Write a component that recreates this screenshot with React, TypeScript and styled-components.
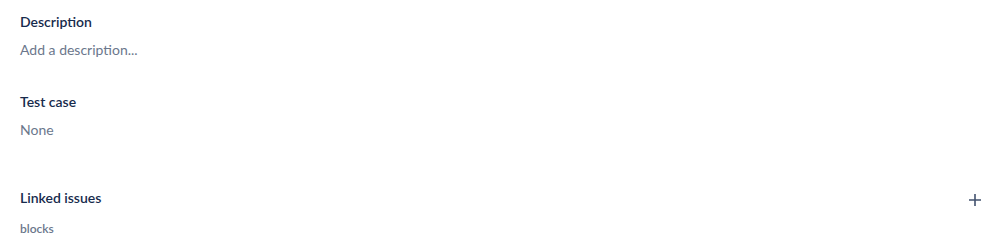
import styled, { createGlobalStyle } from "styled-components";

const GlobalStyle = createGlobalStyle`
  body {
    margin: 0;
    background: #ffffff;
    font-family: "Segoe UI", Lato, "Noto Sans", sans-serif;
    color: #172b4d;
  }
`;

const Page = styled.div`
  width: 999px;
  height: 243px;
  box-sizing: border-box;
  padding: 12px 12px 0 20px;
  display: flex;
  flex-direction: column;
  overflow: hidden;
`;

const Section = styled.section<{ $gap: number }>`
  display: flex;
  flex-direction: column;
  margin-bottom: ${(p) => p.$gap}px;
`;

const Header = styled.div`
  display: flex;
  align-items: center;
  justify-content: space-between;
  height: 20px;
`;

const Title = styled.h2`
  margin: 0;
  font-size: 14px;
  font-weight: 600;
  line-height: 20px;
  color: #172b4d;
`;

const Value = styled.div`
  margin-top: 8px;
  font-size: 14px;
  line-height: 20px;
  color: #6b778c;
`;

const SubLabel = styled.div`
  margin-top: 13px;
  font-size: 12px;
  font-weight: 600;
  line-height: 16px;
  color: #6b778c;
`;

const IconButton = styled.button`
  border: 0;
  background: none;
  padding: 0;
  margin-top: 4px;
  width: 24px;
  height: 24px;
  display: flex;
  align-items: center;
  justify-content: center;
  color: #42526e;
  cursor: pointer;
`;

const PlusIcon = () => (
  <svg width="12" height="12" viewBox="0 0 12 12">
    <path d="M6 0v12M0 6h12" stroke="currentColor" strokeWidth="1.6" />
  </svg>
);

export default function App() {
  return (
    <>
      <GlobalStyle />
      <Page>
        <Section $gap={32}>
          <Header>
            <Title>Description</Title>
          </Header>
          <Value>Add a description...</Value>
        </Section>
        <Section $gap={48}>
          <Header>
            <Title>Test case</Title>
          </Header>
          <Value>None</Value>
        </Section>
        <Section $gap={0}>
          <Header>
            <Title>Linked issues</Title>
            <IconButton aria-label="Link issue">
              <PlusIcon />
            </IconButton>
          </Header>
          <SubLabel>blocks</SubLabel>
        </Section>
      </Page>
    </>
  );
}
